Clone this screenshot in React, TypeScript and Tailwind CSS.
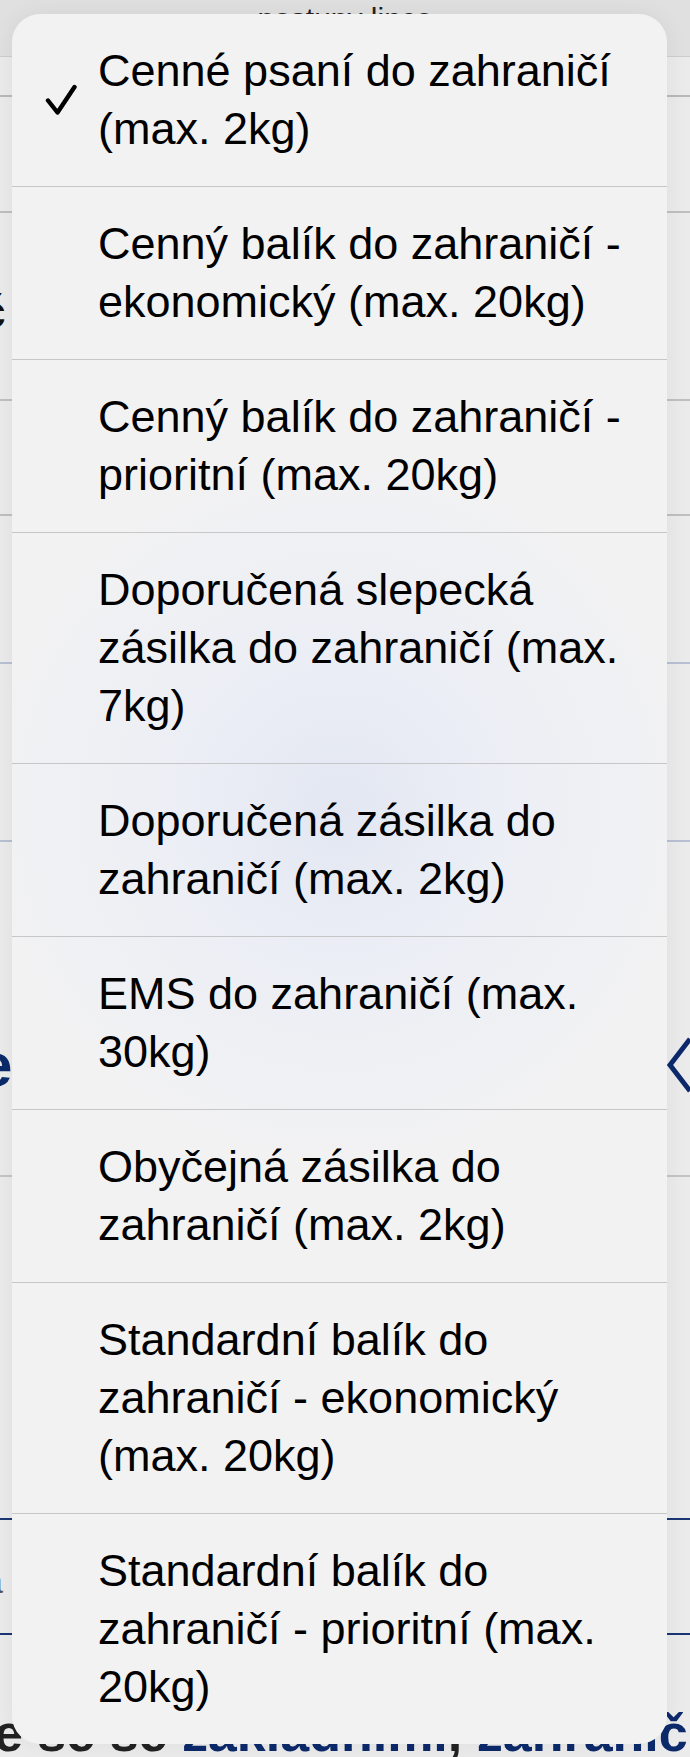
const options: { lines: string[]; checked?: boolean }[] = [
  { lines: ["Cenné psaní do zahraničí", "(max. 2kg)"], checked: true },
  { lines: ["Cenný balík do zahraničí -", "ekonomický (max. 20kg)"] },
  { lines: ["Cenný balík do zahraničí -", "prioritní (max. 20kg)"] },
  { lines: ["Doporučená slepecká", "zásilka do zahraničí (max.", "7kg)"] },
  { lines: ["Doporučená zásilka do", "zahraničí (max. 2kg)"] },
  { lines: ["EMS do zahraničí (max.", "30kg)"] },
  { lines: ["Obyčejná zásilka do", "zahraničí (max. 2kg)"] },
  { lines: ["Standardní balík do", "zahraničí - ekonomický", "(max. 20kg)"] },
  { lines: ["Standardní balík do", "zahraničí - prioritní (max.", "20kg)"] },
];

function Check() {
  return (
    <svg width="32" height="32" viewBox="0 0 32 32" fill="none">
      <path
        d="M3 16.5 L12.5 28.5 L29.5 3"
        stroke="#000"
        strokeWidth="4.4"
        strokeLinecap="round"
        strokeLinejoin="round"
      />
    </svg>
  );
}

function PageBehind() {
  return (
    <div className="flex flex-col">
      <div className="h-[57px] bg-[#e0e0e0] border-b border-[#cdcdcd] text-center text-[30px] leading-none text-[#222] pt-[4px]">
        postupy lince
      </div>
      <div className="h-[40px] border-b-2 border-[#b9b9b9]" />
      <div className="h-[116px] border-b-2 border-[#bfbfbf]" />
      <div className="h-[188px] border-b-2 border-[#bfbfbf] pt-[76px]">
        <span className="block -ml-[20px] text-[46px] font-bold leading-none text-[#111]">č</span>
      </div>
      <div className="h-[115px] border-b-2 border-[#bfbfbf]" />
      <div className="h-[148px] border-b-2 border-[#b8c1d3]" />
      <div className="h-[178px] border-b-2 border-[#b8c1d3]" />
      <div className="h-[335px] border-b-2 border-[#c4c4c4] pt-[194px]">
        <div className="flex h-[58px] items-center justify-between">
          <span className="block -ml-[22px] text-[62px] font-bold leading-none text-[#0c2a6b]">e</span>
          <svg width="24" height="56" viewBox="0 0 24 56" fill="none">
            <path d="M24 2 L4 28 L24 54" stroke="#0c2a6b" strokeWidth="5" />
          </svg>
        </div>
      </div>
      <div className="h-[343px] border-b-2 border-[#1b3674] pt-[238px]">
        <span className="block -ml-[18px] text-[44px] font-bold leading-none text-[#111]">r</span>
      </div>
      <div className="h-[115px] border-b-2 border-[#1b3674] pt-[44px]">
        <span className="block -ml-[16px] text-[34px] leading-none text-[#555]">á</span>
      </div>
      <div className="h-[123px] pt-[72px] whitespace-nowrap text-[52px] font-bold leading-none text-[#222]">
        <span className="-ml-[6px]">e se se </span>
        <span className="text-[#0c2a6b] underline decoration-[4px] underline-offset-[6px]">základními</span>
        <span>, </span>
        <span className="text-[#0c2a6b] underline decoration-[4px] underline-offset-[6px]">zahraničními</span>
      </div>
    </div>
  );
}

export default function App() {
  return (
    <div className="relative h-[1757px] w-[690px] overflow-hidden bg-[#ebebeb] font-['Liberation_Sans',Arial,sans-serif]">
      <PageBehind />
      <div className="absolute left-[12px] top-[14px] w-[655px] overflow-hidden rounded-[28px] bg-[#f2f2f2] bg-[radial-gradient(circle_at_50%_46%,#e3e7f2_0px,#ebeef5_150px,#f2f2f3_350px)] shadow-[0_0_24px_rgba(0,0,0,0.06)]">
        {options.map((o, i) => (
          <div
            key={i}
            className={`flex items-center py-[28px] ${i > 0 ? "border-t border-[#c6c6c9]" : ""}`}
          >
            <div className="w-[86px] shrink-0 pl-[33px]">{o.checked && <Check />}</div>
            <div className="text-[45px] leading-[58px] text-black">
              {o.lines.map((l, j) => (
                <div key={j} className="whitespace-nowrap">
                  {l}
                </div>
              ))}
            </div>
          </div>
        ))}
      </div>
    </div>
  );
}
